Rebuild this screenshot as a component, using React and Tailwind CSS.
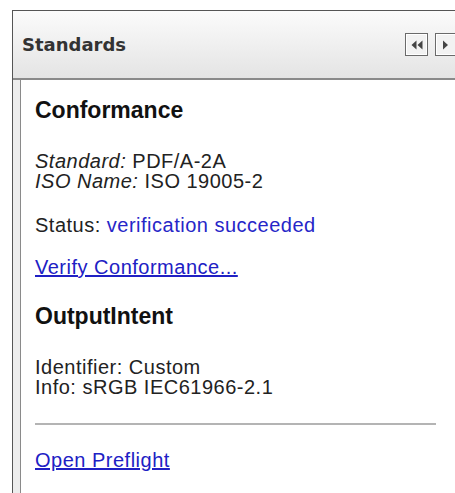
export default function App() {
  return (
    <div className="h-[493px] w-[455px] overflow-hidden bg-white pl-[12px] pt-[10px] font-['Liberation_Sans',Arial,sans-serif]">
      <div className="flex h-full flex-col border-l border-t border-[#555]">
        {/* panel header */}
        <div className="flex h-[69px] shrink-0 items-center border-b-2 border-[#8a8a8a] bg-gradient-to-b from-[#fbfbfb] to-[#e4e4e4] pl-[9px]">
          <span className="font-['DejaVu_Sans',sans-serif] text-[18px] font-bold text-[#333]">
            Standards
          </span>
          <div className="ml-auto mr-[-3px] flex gap-[7px]">
            <button className="flex h-[23px] w-[23px] items-center justify-center border border-[#6a6a6a] bg-[#f2f2f2] shadow-[inset_0_0_0_1px_#fff]">
              <svg width="12" height="10" viewBox="0 0 12 10">
                <path d="M5.5 0.5 L0.5 5 L5.5 9.5 Z M11.5 0.5 L6.5 5 L11.5 9.5 Z" fill="#444" />
              </svg>
            </button>
            <button className="flex h-[23px] w-[23px] items-center justify-start border border-[#6a6a6a] bg-[#f2f2f2] pl-[6px] shadow-[inset_0_0_0_1px_#fff]">
              <svg width="7" height="10" viewBox="0 0 7 10">
                <path d="M1 0.5 L6 5 L1 9.5 Z" fill="#444" />
              </svg>
            </button>
          </div>
        </div>

        <div className="flex flex-1">
          <div className="w-[8px] shrink-0 border-r border-[#8a8a8a] bg-[#ececec]" />
          <div className="flex-1 pl-[14px] pr-[19px] text-[20px] leading-[20px] tracking-[0.5px] text-[#222]">
            <h2 className="mt-[17px] text-[23px] font-bold leading-[26px] tracking-normal text-[#111]">Conformance</h2>
            <div className="mt-[28px]">
              <p><i>Standard:</i> PDF/A-2A</p>
              <p><i>ISO Name:</i> ISO 19005-2</p>
            </div>
            <p className="mt-[24px]">
              Status: <span className="text-[#2626c8]">verification succeeded</span>
            </p>
            <a href="#" className="mt-[22px] block text-[#2020c4] underline">
              Verify Conformance...
            </a>
            <h2 className="mt-[26px] text-[23px] font-bold leading-[26px] tracking-normal text-[#111]">OutputIntent</h2>
            <div className="mt-[28px]">
              <p>Identifier: Custom</p>
              <p>Info: sRGB IEC61966-2.1</p>
            </div>
            <hr className="mt-[26px] border-t-2 border-[#b4b4b4]" />
            <a href="#" className="mt-[25px] block text-[#2020c4] underline">
              Open Preflight
            </a>
          </div>
        </div>
      </div>
    </div>
  );
}
